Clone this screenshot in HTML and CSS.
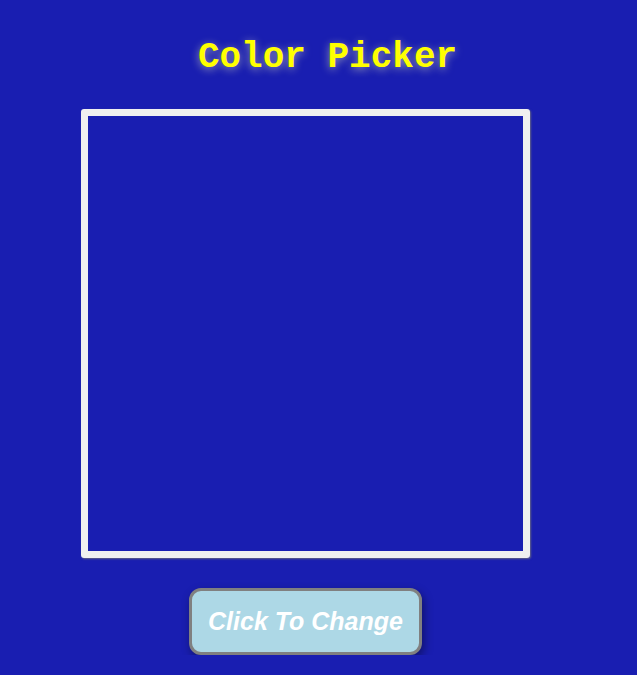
FILE: index.html
```html
<!DOCTYPE html>
<html>
<head>
<meta charset="utf-8">
<link rel="stylesheet" href="styles.css">
</head>
<body>
<div class="app">
  <h1 class="title">Color Picker</h1>
  <div class="swatch"></div>
  <button class="change-btn">Click To Change</button>
</div>
</body>
</html>
```
FILE: styles.css
```css
html, body {
  margin: 0;
  padding: 0;
  background: #191eb1;
}
.app {
  width: 611px;
  display: flex;
  flex-direction: column;
  align-items: center;
  padding-top: 38px;
}
.title {
  margin: 0 0 31px 0;
  padding-left: 44px;
  font-family: "Courier New", Courier, "Nimbus Mono PS", "Nimbus Mono L", FreeMono, "Liberation Mono", monospace;
  font-weight: bold;
  font-size: 36px;
  line-height: 40px;
  color: #ffff00;
  text-shadow: 0 2px 8px rgba(255, 255, 190, 0.55);
}
.swatch {
  width: 435px;
  height: 435px;
  border: 7px solid #f0f0f0;
  border-radius: 3px;
  background: transparent;
  box-shadow: 1px 1px 2px rgba(120, 120, 120, 0.8);
}
.change-btn {
  margin-top: 30px;
  padding: 16px 16px;
  background: #add8e6;
  border: 3px solid #808080;
  border-radius: 12px;
  color: #ffffff;
  font-family: "Liberation Sans", Arial, sans-serif;
  font-weight: bold;
  font-style: italic;
  font-size: 25px;
  box-shadow: 2px 4px 10px rgba(0, 0, 0, 0.4);
}
```
